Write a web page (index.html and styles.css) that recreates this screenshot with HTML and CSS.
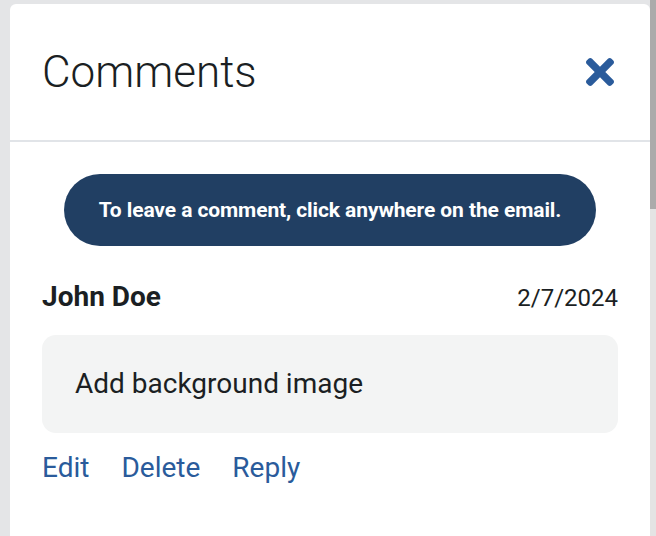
FILE: index.html
```html
<!DOCTYPE html>
<html lang="en">
<head>
    <meta charset="UTF-8">
    <meta name="viewport" content="width=device-width, initial-scale=1.0">
    <title>Comments</title>
    <link rel="stylesheet" href="styles.css">
</head>
<body>

<div class="page">
    <div class="panel">
        <div class="panel-header">
            <h1 class="panel-title">Comments</h1>
            <button class="close-btn" aria-label="Close">
                <svg viewBox="0 80 352 352" width="28" height="28">
                    <path fill="currentColor" d="M242.72 256l100.07-100.07c12.28-12.28 12.28-32.19 0-44.48l-22.24-22.24c-12.28-12.28-32.19-12.28-44.48 0L176 189.28 75.93 89.21c-12.28-12.28-32.19-12.28-44.48 0L9.21 111.45c-12.28 12.28-12.28 32.19 0 44.48L109.28 256 9.21 356.07c-12.28 12.28-12.28 32.19 0 44.48l22.24 22.24c12.28 12.28 32.2 12.28 44.48 0L176 322.72l100.07 100.07c12.28 12.28 32.2 12.28 44.48 0l22.24-22.24c12.28-12.28 12.28-32.19 0-44.48L242.72 256z"/>
                </svg>
            </button>
        </div>

        <div class="panel-body">
            <div class="hint-row">
                <div class="hint">To leave a comment, click anywhere on the email.</div>
            </div>

            <div class="comment">
                <div class="comment-head">
                    <span class="comment-author">John Doe</span>
                    <span class="comment-date">2/7/2024</span>
                </div>
                <div class="comment-text">Add background image</div>
                <div class="comment-actions">
                    <a href="#" class="action-link">Edit</a>
                    <a href="#" class="action-link">Delete</a>
                    <a href="#" class="action-link">Reply</a>
                </div>
            </div>
        </div>
    </div>

    <!-- page scrollbar -->
    <div class="scroll-track">
        <div class="scroll-thumb"></div>
    </div>
</div>

</body>
</html>
```

FILE: styles.css
```css
body {
    margin: 0;
    font-family: 'Roboto', 'Liberation Sans', sans-serif;
    background-color: #e4e5e7;
    color: #1b1f23;
    height: 536px;
    overflow: hidden;
}

.page {
    display: flex;
    height: 536px;
    padding-left: 10px;
}

.panel {
    width: 640px;
    margin-top: 4px;
    background-color: #fff;
    border-radius: 6px 6px 0 0;
}

.panel-header {
    display: flex;
    align-items: center;
    justify-content: space-between;
    height: 136px;
    padding: 0 32px;
    border-bottom: 2px solid #e1e4e8;
}

.panel-title {
    margin: 0;
    font-size: 44px;
    font-weight: 300;
    color: #1b1f23;
}

.close-btn {
    background: none;
    border: none;
    padding: 0;
    margin-right: 4px;
    color: #2a5b9b;
    cursor: pointer;
    display: flex;
}

.panel-body {
    padding: 32px;
}

.hint-row {
    display: flex;
    justify-content: center;
}

.hint {
    background-color: #213f63;
    color: #fff;
    font-size: 21px;
    font-weight: 700;
    letter-spacing: -0.1px;
    height: 72px;
    line-height: 72px;
    padding: 0 35px;
    border-radius: 36px;
}

.comment {
    margin-top: 34px;
}

.comment-head {
    display: flex;
    justify-content: space-between;
    align-items: baseline;
    line-height: 34px;
}

.comment-author {
    font-size: 28px;
    font-weight: 700;
}

.comment-date {
    font-size: 24px;
}

.comment-text {
    margin-top: 20px;
    background-color: #f3f4f4;
    border-radius: 14px;
    padding: 32px 33px;
    font-size: 28px;
    line-height: 34px;
}

.comment-actions {
    display: flex;
    gap: 32px;
    margin-top: 18px;
}

.action-link {
    font-size: 28px;
    line-height: 34px;
    color: #2a5b9b;
    text-decoration: none;
}

.scroll-track {
    width: 6px;
    background-color: #e4e4e4;
}

.scroll-thumb {
    height: 209px;
    background-color: #ababab;
}
```
